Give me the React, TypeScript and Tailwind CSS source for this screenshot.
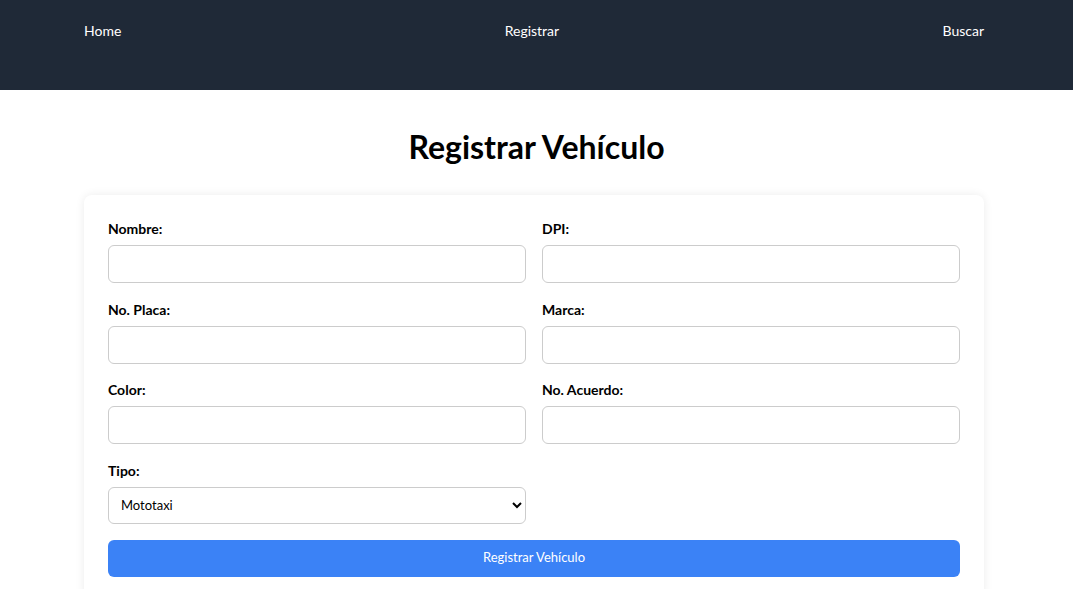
// App.tsx — Registrar Vehículo
const fields: [string, string][] = [
  ['Nombre:', 'DPI:'],
  ['No. Placa:', 'Marca:'],
  ['Color:', 'No. Acuerdo:'],
]

function Field({ label }: { label: string }) {
  return (
    <div className="flex flex-col">
      <label className="mb-[6px] text-[14px] font-bold leading-[20px] text-black">{label}</label>
      <input
        type="text"
        className="h-[38px] w-full rounded-[6px] border border-[#cccccc] bg-white px-3 text-[13px] outline-none"
      />
    </div>
  )
}

export default function App() {
  return (
    <div className="min-h-[589px] bg-white font-['Lato',sans-serif] text-black">
      {/* barra de navegación */}
      <nav className="h-[90px] w-full bg-[#1f2937]">
        <div className="ml-[84px] flex w-[900px] items-start justify-between pt-[21px] text-[14px] leading-[20px] text-white">
          <a href="#">Home</a>
          <a href="#">Registrar</a>
          <a href="#">Buscar</a>
        </div>
      </nav>

      <h1 className="mt-[37px] mb-[28px] text-center text-[32px] font-bold leading-[40px]">
        Registrar Vehículo
      </h1>

      {/* formulario */}
      <form className="ml-[84px] w-[900px] rounded-[8px] bg-white px-6 pt-6 pb-6 shadow-[0_0_10px_rgba(0,0,0,0.08)]">
        <div className="grid grid-cols-2 gap-x-4 gap-y-[16.5px]">
          {fields.flatMap(([a, b]) => [<Field key={a} label={a} />, <Field key={b} label={b} />])}
          <div className="flex flex-col">
            <label className="mb-[6px] text-[14px] font-bold leading-[20px]">Tipo:</label>
            <select className="h-[37px] w-full rounded-[6px] border border-[#cccccc] bg-white px-2 text-[13px] outline-none">
              <option>Mototaxi</option>
            </select>
          </div>
        </div>
        <button
          type="button"
          className="mt-4 h-[37px] w-full rounded-[6px] bg-[#3b82f6] text-[13px] text-white"
        >
          Registrar Vehículo
        </button>
      </form>
    </div>
  )
}
